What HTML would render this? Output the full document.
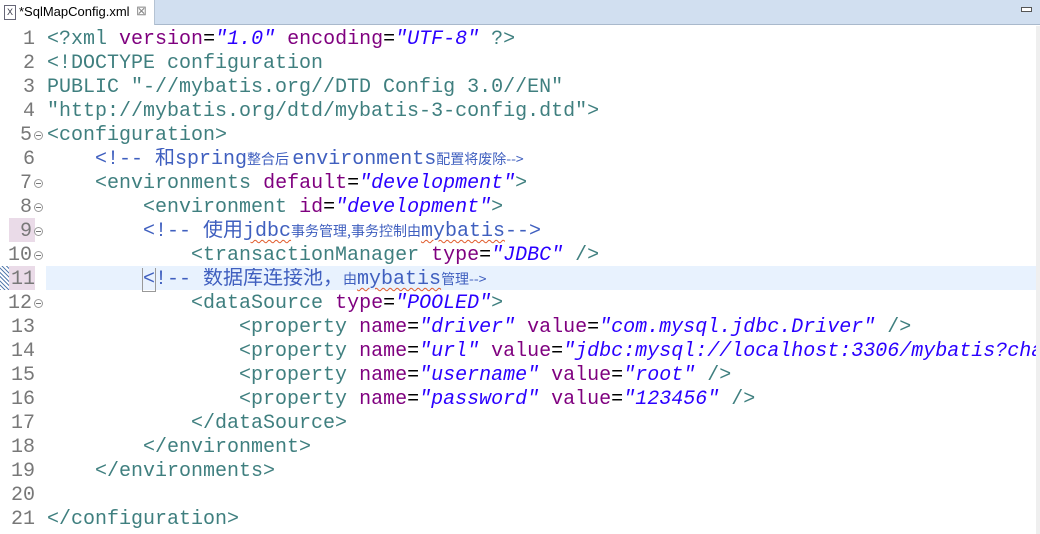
<!DOCTYPE html>
<html><head><meta charset="utf-8"><style>
body{margin:0;width:1040px;height:534px;overflow:hidden;background:#fff;font-family:"Liberation Mono",monospace;position:relative}
.tabbar{position:absolute;left:0;top:0;width:1040px;height:24px;background:#d1dff0;border-bottom:1px solid #a9b9cc;}
.tab{position:absolute;left:0;top:0;width:154px;height:25px;background:#fff;border-right:1px solid #b5c3d3;font-family:"Liberation Sans",sans-serif;font-size:13px;}
.ed{position:absolute;left:0;top:28px;width:1036px;height:506px;overflow:hidden}
.ln{position:absolute;left:0;width:1036px;height:24px;line-height:24px;font-size:20px;white-space:pre;overflow:hidden}
.num{position:absolute;left:0;width:35px;text-align:right;color:#787878;font-size:20px;}
.code{position:absolute;left:47px;color:#000;}
.t{color:#3f7f7f}.a{color:#7f007f}.v{color:#2a00ff;font-style:italic}.c{color:#3f5fbf}
.s{font-family:"Noto Sans CJK SC",sans-serif;font-size:14px;line-height:0}
.b{font-family:"Noto Sans CJK SC",sans-serif;font-size:20px;line-height:0}
.sq{text-decoration:underline wavy #e05a2a;text-decoration-thickness:1px;text-underline-offset:3px}
.fold{position:absolute;left:34px;top:7px;width:7px;height:7px;border:1px solid #999;border-radius:50%;font-size:0}
.fold:after{content:"";position:absolute;left:1px;top:3px;width:5px;height:1px;background:#777}
</style></head><body>
<div class="tabbar"><div class="tab">
<div style="position:absolute;left:4px;top:5px;width:10px;height:13px;border:1px solid #667;font-size:9px;line-height:13px;text-align:center;color:#334">X</div>
<span style="position:absolute;left:19px;top:4px;">*SqlMapConfig.xml</span>
<span style="position:absolute;left:136px;top:3px;color:#888;font-size:13px">⊠</span></div>
<div style="position:absolute;left:1021px;top:7px;width:9px;height:3px;border:1px solid #555;background:#fff"></div>
</div>
<div style="position:absolute;left:1036px;top:26px;width:4px;height:508px;background:#efefef"></div>
<div style="position:absolute;left:0;top:266px;width:9px;height:24px;background:repeating-linear-gradient(45deg,#5a7fb0 0 1px,#fff 1px 3px)"></div>
<div style="position:absolute;left:9px;top:218px;width:26px;height:24px;background:#eadbe8"></div>
<div style="position:absolute;left:9px;top:266px;width:26px;height:24px;background:#eadbe8"></div>
<div style="position:absolute;left:46px;top:266px;width:990px;height:24px;background:#e8f2fe"></div>
<div class="ed">
<div class="ln" style="top:0"><span class="num">1</span><span class="code"><span class="t">&lt;?</span><span class="t">xml</span> <span class="a">version</span>=<span class="v">"1.0"</span> <span class="a">encoding</span>=<span class="v">"UTF-8"</span> <span class="t">?&gt;</span></span></div>
<div class="ln" style="top:24px"><span class="num">2</span><span class="code t">&lt;!DOCTYPE configuration</span></div>
<div class="ln" style="top:48px"><span class="num">3</span><span class="code t">PUBLIC "-//mybatis.org//DTD Config 3.0//EN"</span></div>
<div class="ln" style="top:72px"><span class="num">4</span><span class="code t">"http://mybatis.org/dtd/mybatis-3-config.dtd"&gt;</span></div>
<div class="ln" style="top:96px"><span class="num" style="width:32px">5</span><span class="fold"></span><span class="code t">&lt;configuration&gt;</span></div>
<div class="ln" style="top:120px"><span class="num">6</span><span class="code c">    &lt;!-- <span class="b">和</span>spring<span class="s">整合后 </span>environments<span class="s">配置将废除--&gt;</span></span></div>
<div class="ln" style="top:144px"><span class="num" style="width:32px">7</span><span class="fold"></span><span class="code">    <span class="t">&lt;environments</span> <span class="a">default</span>=<span class="v">"development"</span><span class="t">&gt;</span></span></div>
<div class="ln" style="top:168px"><span class="num" style="width:32px">8</span><span class="fold"></span><span class="code">        <span class="t">&lt;environment</span> <span class="a">id</span>=<span class="v">"development"</span><span class="t">&gt;</span></span></div>
<div class="ln" style="top:192px"><span class="num" style="width:32px">9</span><span class="fold"></span><span class="code c">        &lt;!-- <span class="b">使用</span><span class="sq">jdbc</span><span class="s">事务管理,事务控制由</span><span class="sq">mybatis</span>--&gt;</span></div>
<div class="ln" style="top:216px"><span class="num" style="width:32px">10</span><span class="fold"></span><span class="code">            <span class="t">&lt;transactionManager</span> <span class="a">type</span>=<span class="v">"JDBC"</span> <span class="t">/&gt;</span></span></div>
<div class="ln" style="top:240px"><span class="num">11</span><span class="code c">        <span style="outline:1px solid #999">&lt;</span>!-- <span class="b">数据库连接池，</span><span class="s">由</span><span class="sq">mybatis</span><span class="s">管理--&gt;</span></span></div>
<div class="ln" style="top:264px"><span class="num" style="width:32px">12</span><span class="fold"></span><span class="code">            <span class="t">&lt;dataSource</span> <span class="a">type</span>=<span class="v">"POOLED"</span><span class="t">&gt;</span></span></div>
<div class="ln" style="top:288px"><span class="num">13</span><span class="code">                <span class="t">&lt;property</span> <span class="a">name</span>=<span class="v">"driver"</span> <span class="a">value</span>=<span class="v">"com.mysql.jdbc.Driver"</span> <span class="t">/&gt;</span></span></div>
<div class="ln" style="top:312px"><span class="num">14</span><span class="code">                <span class="t">&lt;property</span> <span class="a">name</span>=<span class="v">"url"</span> <span class="a">value</span>=<span class="v">"jdbc:mysql://localhost:3306/mybatis?cha</span></span></div>
<div class="ln" style="top:336px"><span class="num">15</span><span class="code">                <span class="t">&lt;property</span> <span class="a">name</span>=<span class="v">"username"</span> <span class="a">value</span>=<span class="v">"root"</span> <span class="t">/&gt;</span></span></div>
<div class="ln" style="top:360px"><span class="num">16</span><span class="code">                <span class="t">&lt;property</span> <span class="a">name</span>=<span class="v">"password"</span> <span class="a">value</span>=<span class="v">"123456"</span> <span class="t">/&gt;</span></span></div>
<div class="ln" style="top:384px"><span class="num">17</span><span class="code t">            &lt;/dataSource&gt;</span></div>
<div class="ln" style="top:408px"><span class="num">18</span><span class="code t">        &lt;/environment&gt;</span></div>
<div class="ln" style="top:432px"><span class="num">19</span><span class="code t">    &lt;/environments&gt;</span></div>
<div class="ln" style="top:456px"><span class="num">20</span></div>
<div class="ln" style="top:480px"><span class="num">21</span><span class="code t">&lt;/configuration&gt;</span></div>
</div>
</body></html>
